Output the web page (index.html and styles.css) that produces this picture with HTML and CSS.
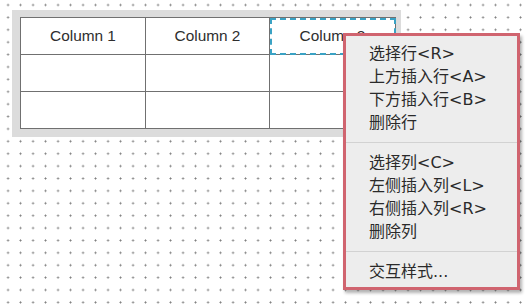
FILE: index.html
```html
<!DOCTYPE html>
<html lang="zh-CN">
<head>
    <meta charset="UTF-8">
    <title>表格右键菜单</title>
    <link rel="stylesheet" href="styles.css">
</head>
<body>
    <div class="canvas">
        <div class="table-frame">
            <table class="grid-table">
                <tr>
                    <th>Column 1</th>
                    <th>Column 2</th>
                    <th class="selected">Column 3</th>
                </tr>
                <tr><td></td><td></td><td></td></tr>
                <tr><td></td><td></td><td></td></tr>
            </table>
        </div>

        <div class="context-menu">
            <div class="menu-item">选择行&lt;R&gt;</div>
            <div class="menu-item">上方插入行&lt;A&gt;</div>
            <div class="menu-item">下方插入行&lt;B&gt;</div>
            <div class="menu-item">删除行</div>
            <div class="menu-sep"></div>
            <div class="menu-item">选择列&lt;C&gt;</div>
            <div class="menu-item">左侧插入列&lt;L&gt;</div>
            <div class="menu-item">右侧插入列&lt;R&gt;</div>
            <div class="menu-item">删除列</div>
            <div class="menu-sep"></div>
            <div class="menu-item">交互样式...</div>
        </div>
    </div>
</body>
</html>
```

FILE: styles.css
```css
body {
    margin: 0;
    font-family: "Liberation Sans", "Noto Sans CJK SC", sans-serif;
    color: #333;
}

.canvas {
    position: relative;
    width: 528px;
    height: 305px;
    overflow: hidden;
    background-color: #fff;
    background-image: radial-gradient(circle, #7a7a7a 0.8px, transparent 1.2px);
    background-size: 12.5px 12.4px;
    background-position: 1.8px -1.2px;
}

.table-frame {
    position: absolute;
    left: 12px;
    top: 10px;
    background: #dcdcdc;
    padding: 7px 5px 8px 8px;
}

.grid-table {
    border-collapse: collapse;
    background: #fff;
}

.grid-table th,
.grid-table td {
    border: 1px solid #707070;
    height: 36px;
    padding: 0;
    text-align: center;
    font-size: 15.4px;
    font-weight: normal;
    color: #2e2e2e;
}

.grid-table th:nth-child(1) { width: 124px; }
.grid-table th:nth-child(2) { width: 123px; }
.grid-table th:nth-child(3) { width: 125px; }

.grid-table th.selected {
    outline: 2px dashed #3aa2c4;
    outline-offset: -2px;
}

.context-menu {
    position: absolute;
    left: 343px;
    top: 33px;
    width: 171px;
    padding: 6px 0 4px;
    background: #ededed;
    border: 3px solid #d0646f;
    box-shadow: 2px 3px 3px rgba(0, 0, 0, 0.3);
    font-family: "DejaVu Sans", "Noto Sans CJK SC", sans-serif;
}

.menu-item {
    height: 23px;
    line-height: 23px;
    padding-left: 23px;
    font-size: 16px;
    color: #2a2a2a;
    white-space: nowrap;
}

.menu-sep {
    height: 1px;
    margin: 8px 0;
    background: #d2d2d2;
}
```
